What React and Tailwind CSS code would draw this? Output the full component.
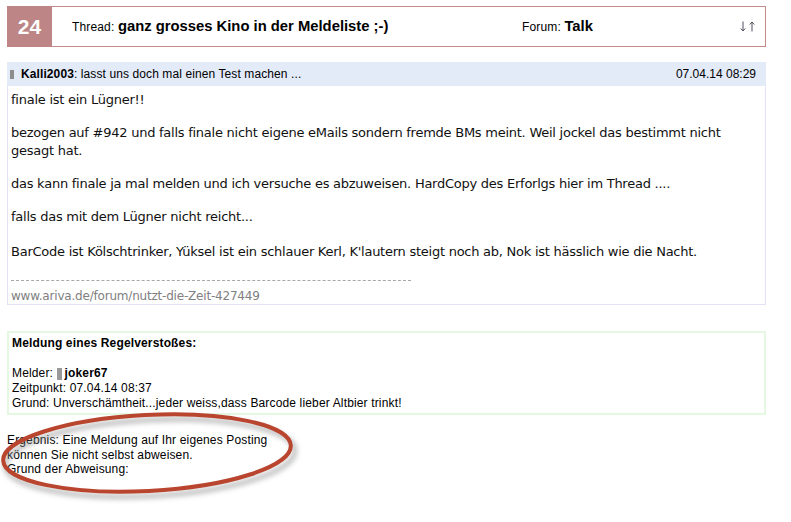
import React from "react";

export default function App() {
  const arial = { fontFamily: '"Liberation Sans", Arial, sans-serif' };
  const verdana = { fontFamily: '"DejaVu Sans", Verdana, sans-serif' };
  return (
    <div className="relative w-[791px] h-[522px] bg-white overflow-hidden text-black tracking-[0.15px]" style={arial}>
      <div className="ml-[7px] w-[759px] pt-[6px]">
        {/* Thread header */}
        <div className="flex h-[41px] border border-[#c38a8a] items-stretch">
          <div className="w-[45px] -my-px -ml-px bg-[#bd8585] flex items-center justify-center text-white font-bold text-[21px] tracking-normal">24</div>
          <div className="flex-1 flex items-center pl-[20px] pr-[10px]">
            <div className="w-[450px] text-[12px]">
              Thread: <span className="font-bold text-[14.8px] tracking-normal">ganz grosses Kino in der Meldeliste ;-)</span>
            </div>
            <div className="flex-1 text-[12px]">
              Forum: <span className="font-bold text-[14.8px] tracking-normal">Talk</span>
            </div>
            <div className="flex items-center gap-[3px] text-[#4e4e5e]">
              <svg width="6" height="11" viewBox="0 0 6 11"><path d="M3 0.5V10M0.8 7.5L3 10L5.2 7.5" fill="none" stroke="currentColor" strokeWidth="1" /></svg>
              <svg width="6" height="11" viewBox="0 0 6 11"><path d="M3 10.5V1M0.8 3.5L3 1L5.2 3.5" fill="none" stroke="currentColor" strokeWidth="1" /></svg>
            </div>
          </div>
        </div>

        {/* Post */}
        <div className="mt-[15px] border border-[#e2e2f6]">
          <div className="h-[24px] -mt-px -mx-px bg-[#e3ebf9] flex items-center pl-[3px] pr-[10px] text-[12px] tracking-[0.1px]">
            <span className="inline-block w-[4px] h-[9px] bg-[#8c8c8c] mr-[7px]"></span>
            <span className="font-bold">Kalli2003</span>
            <span>: lasst uns doch mal einen Test machen ...</span>
            <span className="ml-auto tracking-normal">07.04.14 08:29</span>
          </div>
          <div className="pl-[3px] pr-[6px] pt-[5px] text-[13px] leading-[18px] text-[#111] tracking-[-0.25px]" style={verdana}>
            <p>finale ist ein Lügner!!</p>
            <p className="mt-[15px]">bezogen auf #942 und falls finale nicht eigene eMails sondern fremde BMs meint. Weil jockel das bestimmt nicht<br />gesagt hat.</p>
            <p className="mt-[15px]">das kann finale ja mal melden und ich versuche es abzuweisen. HardCopy des Erforlgs hier im Thread ....</p>
            <p className="mt-[15px]">falls das mit dem Lügner nicht reicht...</p>
            <p className="mt-[17px]">BarCode ist Kölschtrinker, Yüksel ist ein schlauer Kerl, K'lautern steigt noch ab, Nok ist hässlich wie die Nacht.</p>
            <div className="mt-[19px] w-[400px] border-t border-dashed border-[#a8a8a8]"></div>
            <div className="mt-[7px] text-[12px] leading-[16px] text-[#808080] tracking-[-0.2px]">www.ariva.de/forum/nutzt-die-Zeit-427449</div>
          </div>
        </div>

        {/* Meldung */}
        <div className="mt-[26px] border-2 border-[#e4f8e2] pl-[3px] pt-[3px] pb-[2px] text-[12px] leading-[15px]">
          <div className="font-bold">Meldung eines Regelverstoßes:</div>
          <div className="h-[15px]"></div>
          <div className="flex items-center">
            Melder:&nbsp;<span className="inline-block w-[5px] h-[12px] bg-[#999] mr-[3px]"></span><span className="font-bold">joker67</span>
          </div>
          <div>Zeitpunkt: 07.04.14 08:37</div>
          <div>Grund: Unverschämtheit...jeder weiss,dass Barcode lieber Altbier trinkt!</div>
        </div>
      </div>

      <div className="ml-[7px] mt-[18px] text-[12px] leading-[14.5px]">
        <div>Ergebnis: Eine Meldung auf Ihr eigenes Posting</div>
        <div>können Sie nicht selbst abweisen.</div>
        <div>Grund der Abweisung:</div>
      </div>

      {/* red ellipse annotation */}
      <svg className="absolute left-0 top-[405px]" width="320" height="110" viewBox="0 0 320 110">
        <defs>
          <filter id="sh" x="-20%" y="-30%" width="140%" height="160%">
            <feGaussianBlur stdDeviation="2.5" />
          </filter>
        </defs>
        <ellipse cx="150" cy="53" rx="145" ry="38" transform="rotate(-3 150 53)" fill="none" stroke="#8a8a8a" strokeOpacity="0.55" strokeWidth="5" filter="url(#sh)" />
        <ellipse cx="147" cy="48" rx="144" ry="38" transform="rotate(-3 147 48)" fill="none" stroke="#b9452f" strokeWidth="4" />
      </svg>
    </div>
  );
}
